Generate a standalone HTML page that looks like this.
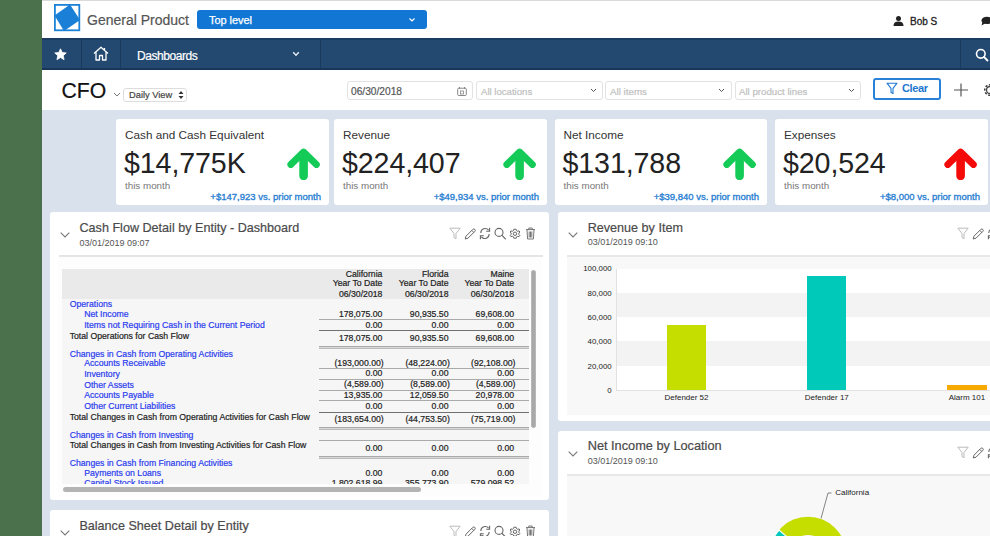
<!DOCTYPE html>
<html><head><meta charset="utf-8">
<style>
*{margin:0;padding:0;box-sizing:border-box}
html,body{width:990px;height:536px;overflow:hidden}
body{position:relative;background:#d9e2ec;font-family:"Liberation Sans",sans-serif;color:#222}
.a{position:absolute}
.t{position:absolute;white-space:nowrap;line-height:1;-webkit-text-stroke:0.2px currentColor}
#green{left:0;top:0;width:42px;height:536px;background:#4a704c}
#hdr{left:42px;top:0;width:948px;height:38px;background:#fff;border-top:1px solid #dadada}
#nav{left:42px;top:38px;width:948px;height:32px;background:#234970;border-top:2px solid #1b3c61;border-bottom:2px solid #173658}
.sep{position:absolute;top:0;width:1px;height:29px;background:#1a3a5c}
#filt{left:42px;top:70px;width:948px;height:40px;background:#fff}
.sel{position:absolute;height:18.5px;border:1px solid #e2e2e2;border-radius:3px;background:#fff}
.card{position:absolute;top:119px;height:86px;background:#fff;border-radius:3px}
.card .ti{position:absolute;left:9px;top:9px;font-size:11.75px;color:#333;white-space:nowrap}
.card .v{position:absolute;left:8px;top:28.4px;font-size:28.6px;color:#222;white-space:nowrap;letter-spacing:-0.1px}
.card .tm{position:absolute;left:9px;top:61px;font-size:9.8px;color:#777;white-space:nowrap}
.card .pm{position:absolute;right:8px;top:72px;font-size:9.5px;color:#2a80d2;white-space:nowrap;-webkit-text-stroke:0.35px #2a80d2}
.card svg{position:absolute}
.panel{position:absolute;background:#fff;border-radius:3px}
.ptitle{position:absolute;font-size:12.6px;color:#444;white-space:nowrap}
.pdate{position:absolute;font-size:8.9px;color:#555;white-space:nowrap}
.tbl{font-size:8.7px;white-space:nowrap}
.lb{position:absolute;color:#3535e8;white-space:nowrap;line-height:1}
.lk{position:absolute;color:#222;white-space:nowrap;line-height:1}
.num{position:absolute;color:#222;white-space:nowrap;line-height:1;text-align:right;width:90px}
.hl{position:absolute;left:319px;width:210px;height:1px;background:#9a9a9a}
</style></head><body>
<div id="green" class="a"></div>

<!-- header -->
<div id="hdr" class="a"></div>
<svg class="a" style="left:54px;top:4px" width="27" height="28" viewBox="0 0 27 28">
 <rect x="0.9" y="0.9" width="24.4" height="25.4" fill="none" stroke="#1c82d8" stroke-width="1.8"/>
 <polygon points="16,0.5 26,16 10,27 0.5,11.5" fill="#1a7fd6"/>
</svg>
<div class="t" style="left:87px;top:12.5px;font-size:14px;color:#555">General Product</div>
<div class="a" style="left:197px;top:10px;width:229.5px;height:19px;background:#1277d4;border-radius:3px"></div>
<div class="t" style="left:209px;top:15px;font-size:11px;color:#fff;letter-spacing:-0.05px;-webkit-text-stroke:0.25px #fff">Top level</div>
<svg class="a" style="left:407.7px;top:17px" width="8" height="6" viewBox="0 0 8 6"><path d="M1.5 1.5 L4 4 L6.5 1.5" fill="none" stroke="#fff" stroke-width="1.2"/></svg>
<svg class="a" style="left:893px;top:16px" width="11" height="10" viewBox="0 0 11 10"><circle cx="5.5" cy="2.6" r="2.5" fill="#222"/><path d="M0.5 10 Q0.5 5.6 5.5 5.6 Q10.5 5.6 10.5 10 Z" fill="#222"/></svg>
<div class="t" style="left:910px;top:16.6px;font-size:10px;color:#222;-webkit-text-stroke:0.3px #222;letter-spacing:0px">Bob S</div>
<svg class="a" style="left:981px;top:16px" width="12" height="10" viewBox="0 0 12 10"><ellipse cx="6" cy="4.4" rx="5.5" ry="3.7" fill="#222"/><path d="M1.5 6 L0.5 9.5 L4.5 7.2 Z" fill="#222"/></svg>

<!-- nav -->
<div id="nav" class="a">
 <div class="sep" style="left:39px"></div>
 <div class="sep" style="left:78px"></div>
 <div class="sep" style="left:277.5px"></div>
 <div class="sep" style="left:918px"></div>
</div>
<svg class="a" style="left:54px;top:48px" width="13" height="13" viewBox="0 0 24 24"><path d="M12 1.5 L15.2 8.3 L22.6 9.1 L17 14.1 L18.6 21.5 L12 17.7 L5.4 21.5 L7 14.1 L1.4 9.1 L8.8 8.3 Z" fill="#fff" stroke="#fff" stroke-width="1.5" stroke-linejoin="round"/></svg>
<svg class="a" style="left:93px;top:46px" width="16" height="15" viewBox="0 0 16 15"><path d="M1 7.5 L8 1.2 L15 7.5 M3 6 V14 H6.5 V9.5 H9.5 V14 H13 V6 M11.5 2 V4.5" fill="none" stroke="#fff" stroke-width="1.3" stroke-linejoin="round"/></svg>
<div class="t" style="left:137px;top:49.7px;font-size:12px;color:#fff;letter-spacing:-0.45px">Dashboards</div>
<svg class="a" style="left:292px;top:51px" width="8" height="6" viewBox="0 0 8 6"><path d="M1.2 1.2 L4 4.2 L6.8 1.2" fill="none" stroke="#e6ecf2" stroke-width="1.4"/></svg>
<svg class="a" style="left:975px;top:48px" width="14" height="14" viewBox="0 0 14 14"><circle cx="5.8" cy="5.8" r="4.3" fill="none" stroke="#fff" stroke-width="1.6"/><path d="M9 9 L12.5 12.5" stroke="#fff" stroke-width="1.8" stroke-linecap="round"/></svg>

<!-- filter row -->
<div id="filt" class="a"></div>
<div class="t" style="left:61.5px;top:79.6px;font-size:21.2px;color:#111">CFO</div>
<svg class="a" style="left:113px;top:92px" width="8" height="5" viewBox="0 0 8 5"><path d="M1 1 L4 4 L7 1" fill="none" stroke="#777" stroke-width="1"/></svg>
<div class="a" style="left:123px;top:88px;width:64px;height:14px;border:1px solid #ddd;border-radius:3px;background:#fff"></div>
<div class="t" style="left:129px;top:90.5px;font-size:9.3px;color:#444">Daily View</div>
<svg class="a" style="left:178px;top:90px" width="6" height="10" viewBox="0 0 6 10"><path d="M0.5 4 L3 1 L5.5 4 Z M0.5 6 L3 9 L5.5 6 Z" fill="#333"/></svg>

<div class="sel" style="left:347px;top:81px;width:126px"></div>
<div class="t" style="left:351px;top:87px;font-size:10.2px;color:#555">06/30/2018</div>
<svg class="a" style="left:457px;top:87px" width="10" height="9" viewBox="0 0 10 9"><rect x="0.7" y="1.2" width="8.6" height="7.3" rx="1" fill="none" stroke="#888" stroke-width="1"/><path d="M2.5 0 V2 M7.5 0 V2" stroke="#888" stroke-width="1"/><rect x="3.5" y="4" width="3" height="3" fill="none" stroke="#888" stroke-width="0.8"/></svg>
<div class="sel" style="left:476px;top:81px;width:127px"></div>
<div class="t" style="left:481px;top:87px;font-size:9.6px;color:#c0c0c0">All locations</div>
<svg class="a" style="left:590px;top:88px" width="7" height="5" viewBox="0 0 7 5"><path d="M1 1 L3.5 3.5 L6 1" fill="none" stroke="#555" stroke-width="1"/></svg>
<div class="sel" style="left:605px;top:81px;width:127px"></div>
<div class="t" style="left:610px;top:87px;font-size:9.8px;color:#c0c0c0">All items</div>
<svg class="a" style="left:718px;top:88px" width="7" height="5" viewBox="0 0 7 5"><path d="M1 1 L3.5 3.5 L6 1" fill="none" stroke="#555" stroke-width="1"/></svg>
<div class="sel" style="left:735px;top:81px;width:126px"></div>
<div class="t" style="left:739px;top:87px;font-size:9.7px;color:#c0c0c0">All product lines</div>
<svg class="a" style="left:848px;top:88px" width="7" height="5" viewBox="0 0 7 5"><path d="M1 1 L3.5 3.5 L6 1" fill="none" stroke="#555" stroke-width="1"/></svg>

<div class="a" style="left:873px;top:78px;width:68px;height:22px;border:2px solid #2a82d8;border-radius:3px"></div>
<svg class="a" style="left:886px;top:82px" width="12" height="13" viewBox="0 0 12 13"><path d="M1 1.2 H11 L7 6.3 V11.5 L5 10.2 V6.3 Z" fill="none" stroke="#1e78cf" stroke-width="1.1" stroke-linejoin="round"/></svg>
<div class="t" style="left:902px;top:83px;font-size:11px;color:#1e78cf;font-weight:bold;letter-spacing:-0.4px;-webkit-text-stroke:0">Clear</div>
<svg class="a" style="left:953px;top:83px" width="16" height="14" viewBox="0 0 16 14"><path d="M1 7 H15 M8 0.5 V13.5" stroke="#555" stroke-width="1.2"/></svg>
<svg class="a" style="left:982px;top:82px" width="16" height="16" viewBox="0 0 16 16"><circle cx="8" cy="8" r="5.2" fill="none" stroke="#444" stroke-width="1.6" stroke-dasharray="2.2 1.6"/><circle cx="8" cy="8" r="3.5" fill="none" stroke="#444" stroke-width="1.3"/></svg>

<!-- KPI cards -->
<div class="card" style="left:116px;width:213px">
 <div class="ti">Cash and Cash Equivalent</div>
 <div class="v">$14,775K</div>
 <div class="tm">this month</div>
 <div class="pm">+$147,923 vs. prior month</div>
 <svg style="left:170px;top:28px" width="36" height="33" viewBox="0 0 36 33"><path d="M4.8 17.5 L17.6 5 L30.4 17.5" fill="none" stroke="#14cb57" stroke-width="6.8" stroke-linecap="round" stroke-linejoin="round"/><path d="M17.6 8 V29" stroke="#14cb57" stroke-width="8.6" stroke-linecap="round"/></svg>
</div>
<div class="card" style="left:334px;width:213px">
 <div class="ti">Revenue</div>
 <div class="v">$224,407</div>
 <div class="tm">this month</div>
 <div class="pm">+$49,934 vs. prior month</div>
 <svg style="left:168px;top:28px" width="36" height="33" viewBox="0 0 36 33"><path d="M4.8 17.5 L17.6 5 L30.4 17.5" fill="none" stroke="#14cb57" stroke-width="6.8" stroke-linecap="round" stroke-linejoin="round"/><path d="M17.6 8 V29" stroke="#14cb57" stroke-width="8.6" stroke-linecap="round"/></svg>
</div>
<div class="card" style="left:554.5px;width:212.5px">
 <div class="ti">Net Income</div>
 <div class="v">$131,788</div>
 <div class="tm">this month</div>
 <div class="pm">+$39,840 vs. prior month</div>
 <svg style="left:167px;top:28px" width="36" height="33" viewBox="0 0 36 33"><path d="M4.8 17.5 L17.6 5 L30.4 17.5" fill="none" stroke="#14cb57" stroke-width="6.8" stroke-linecap="round" stroke-linejoin="round"/><path d="M17.6 8 V29" stroke="#14cb57" stroke-width="8.6" stroke-linecap="round"/></svg>
</div>
<div class="card" style="left:775px;width:213px">
 <div class="ti">Expenses</div>
 <div class="v">$20,524</div>
 <div class="tm">this month</div>
 <div class="pm">+$8,000 vs. prior month</div>
 <svg style="left:168px;top:28px" width="36" height="33" viewBox="0 0 36 33"><path d="M4.8 17.5 L17.6 5 L30.4 17.5" fill="none" stroke="#f50a0a" stroke-width="6.8" stroke-linecap="round" stroke-linejoin="round"/><path d="M17.6 8 V29" stroke="#f50a0a" stroke-width="8.6" stroke-linecap="round"/></svg>
</div>

<!-- PANELS -->
<div class="a" style="left:50px;top:212px;width:499px;height:288px;background:#fff;border-radius:3px"></div>
<svg class="a" style="left:60px;top:232px;" width="10" height="6" viewBox="0 0 10 6"><path d="M0.7 0.7 L5 5 L9.3 0.7" fill="none" stroke="#777" stroke-width="1.1"/></svg>
<div class="t" style="top:222.03px;font-size:12.6px;color:#4a4a4a;left:79.50px;">Cash Flow Detail by Entity - Dashboard</div>
<div class="t" style="top:238.78px;font-size:9px;color:#555;left:79.50px;-webkit-text-stroke:0">03/01/2019 09:07</div>
<svg class="a" style="left:449px;top:227px;" width="12" height="13" viewBox="0 0 12 13"><path d="M0.8 1.2 H11.2 L7 6.5 V11.8 L5 10.4 V6.5 Z" fill="none" stroke="#bbb" stroke-width="1" stroke-linejoin="round"/></svg>
<svg class="a" style="left:463.5px;top:227px;" width="12" height="13" viewBox="0 0 12 13"><path d="M2 9.2 L8.8 2.4 Q9.8 1.4 10.8 2.4 Q11.8 3.4 10.8 4.4 L4 11.2 L1.2 12 Z M7.8 3.4 L9.8 5.4" fill="none" stroke="#666" stroke-width="1" stroke-linejoin="round"/></svg>
<svg class="a" style="left:478.5px;top:227px;" width="12" height="13" viewBox="0 0 12 13"><path d="M1.8 6 A4.4 4.4 0 0 1 9.6 3.2 M10.2 7 A4.4 4.4 0 0 1 2.4 9.8" fill="none" stroke="#666" stroke-width="1.1"/><path d="M10.6 0.8 V4.2 H7.2 M1.4 12.2 V8.8 H4.8" fill="none" stroke="#666" stroke-width="1.1"/></svg>
<svg class="a" style="left:493.5px;top:227px;" width="12" height="13" viewBox="0 0 12 13"><circle cx="5" cy="5.4" r="4" fill="none" stroke="#666" stroke-width="1.1"/><path d="M8 8.4 L11.4 11.8" stroke="#666" stroke-width="1.2" stroke-linecap="round"/></svg>
<svg class="a" style="left:509px;top:227px;" width="12" height="13" viewBox="0 0 12 13"><path d="M6 1.2 L7.2 1.3 L7.6 2.7 L8.7 3.3 L10.1 2.9 L10.8 4 L9.9 5.1 L9.9 6.4 L10.8 7.5 L10.1 8.6 L8.7 8.3 L7.6 8.8 L7.2 10.2 L4.8 10.2 L4.4 8.8 L3.3 8.3 L1.9 8.6 L1.2 7.5 L2.1 6.4 L2.1 5.1 L1.2 4 L1.9 2.9 L3.3 3.3 L4.4 2.7 L4.8 1.3 Z" transform="translate(0,1)" fill="none" stroke="#666" stroke-width="1" stroke-linejoin="round"/><circle cx="6" cy="6.75" r="1.7" fill="none" stroke="#666" stroke-width="1"/></svg>
<svg class="a" style="left:524.5px;top:227px;" width="11" height="13" viewBox="0 0 11 13"><path d="M1 2.6 H10 M3.8 2.6 V1 H7.2 V2.6 M2 2.6 L2.6 12 H8.4 L9 2.6 M4.2 4.5 V10.5 M5.5 4.5 V10.5 M6.8 4.5 V10.5" fill="none" stroke="#666" stroke-width="0.9"/></svg>
<div class="a" style="left:58.5px;top:255.3px;width:484px;height:1.5px;background:#e3e5e8;"></div>
<div class="a" style="left:58px;top:257px;width:484px;height:238px;background:#fdfdfd;"></div>
<div class="a" style="left:62px;top:269px;width:467px;height:29.5px;background:#eaeaea;"></div>
<div class="a" style="left:62px;top:298.5px;width:467px;height:185.5px;background:#f6f6f6;"></div>
<div class="t" style="top:269.54px;font-size:8.7px;color:#222;right:607.60px;">California</div>
<div class="t" style="top:269.54px;font-size:8.7px;color:#222;right:541.50px;">Florida</div>
<div class="t" style="top:269.54px;font-size:8.7px;color:#222;right:475.80px;">Maine</div>
<div class="t" style="top:279.44px;font-size:8.7px;color:#222;right:607.60px;">Year To Date</div>
<div class="t" style="top:279.44px;font-size:8.7px;color:#222;right:541.50px;">Year To Date</div>
<div class="t" style="top:279.44px;font-size:8.7px;color:#222;right:475.80px;">Year To Date</div>
<div class="t" style="top:289.84px;font-size:8.7px;color:#222;right:607.60px;">06/30/2018</div>
<div class="t" style="top:289.84px;font-size:8.7px;color:#222;right:541.50px;">06/30/2018</div>
<div class="t" style="top:289.84px;font-size:8.7px;color:#222;right:475.80px;">06/30/2018</div>
<div class="t" style="top:300.04px;font-size:8.7px;color:#2b3cee;left:69.70px;">Operations</div>
<div class="t" style="top:310.24px;font-size:8.7px;color:#2b3cee;left:84.20px;">Net Income</div>
<div class="t" style="top:309.84px;font-size:8.7px;color:#222;right:607.60px;">178,075.00</div>
<div class="t" style="top:309.84px;font-size:8.7px;color:#222;right:541.50px;">90,935.50</div>
<div class="t" style="top:309.84px;font-size:8.7px;color:#222;right:475.80px;">69,608.00</div>
<div class="a" style="left:319px;top:319px;width:210px;height:1px;background:#aaa;"></div>
<div class="t" style="top:321.04px;font-size:8.7px;color:#2b3cee;left:84.20px;">Items not Requiring Cash in the Current Period</div>
<div class="t" style="top:320.64px;font-size:8.7px;color:#222;right:607.60px;">0.00</div>
<div class="t" style="top:320.64px;font-size:8.7px;color:#222;right:541.50px;">0.00</div>
<div class="t" style="top:320.64px;font-size:8.7px;color:#222;right:475.80px;">0.00</div>
<div class="a" style="left:319px;top:330px;width:210px;height:1px;background:#707070;"></div>
<div class="t" style="top:331.54px;font-size:8.7px;color:#222;left:69.70px;">Total Operations for Cash Flow</div>
<div class="t" style="top:334.14px;font-size:8.7px;color:#222;right:607.60px;">178,075.00</div>
<div class="t" style="top:334.14px;font-size:8.7px;color:#222;right:541.50px;">90,935.50</div>
<div class="t" style="top:334.14px;font-size:8.7px;color:#222;right:475.80px;">69,608.00</div>
<div class="a" style="left:319px;top:345.6px;width:210px;height:1.2px;background:#aaa;"></div>
<div class="a" style="left:319px;top:346.8px;width:210px;height:1px;background:#d8d8d8;"></div>
<div class="a" style="left:319px;top:347.8px;width:210px;height:1px;background:#bbb;"></div>
<div class="t" style="top:349.74px;font-size:8.7px;color:#2b3cee;left:69.70px;">Changes in Cash from Operating Activities</div>
<div class="t" style="top:359.44px;font-size:8.7px;color:#2b3cee;left:84.20px;">Accounts Receivable</div>
<div class="t" style="top:358.54px;font-size:8.7px;color:#222;right:606.30px;">(193,000.00)</div>
<div class="t" style="top:358.54px;font-size:8.7px;color:#222;right:540.20px;">(48,224.00)</div>
<div class="t" style="top:358.54px;font-size:8.7px;color:#222;right:474.50px;">(92,108.00)</div>
<div class="a" style="left:319px;top:368.2px;width:210px;height:1px;background:#aaa;"></div>
<div class="t" style="top:370.24px;font-size:8.7px;color:#2b3cee;left:84.20px;">Inventory</div>
<div class="t" style="top:369.34px;font-size:8.7px;color:#222;right:607.60px;">0.00</div>
<div class="t" style="top:369.34px;font-size:8.7px;color:#222;right:541.50px;">0.00</div>
<div class="t" style="top:369.34px;font-size:8.7px;color:#222;right:475.80px;">0.00</div>
<div class="a" style="left:319px;top:378.9px;width:210px;height:1px;background:#aaa;"></div>
<div class="t" style="top:380.84px;font-size:8.7px;color:#2b3cee;left:84.20px;">Other Assets</div>
<div class="t" style="top:379.94px;font-size:8.7px;color:#222;right:606.30px;">(4,589.00)</div>
<div class="t" style="top:379.94px;font-size:8.7px;color:#222;right:540.20px;">(8,589.00)</div>
<div class="t" style="top:379.94px;font-size:8.7px;color:#222;right:474.50px;">(4,589.00)</div>
<div class="a" style="left:319px;top:389.7px;width:210px;height:1px;background:#aaa;"></div>
<div class="t" style="top:391.44px;font-size:8.7px;color:#2b3cee;left:84.20px;">Accounts Payable</div>
<div class="t" style="top:390.74px;font-size:8.7px;color:#222;right:607.60px;">13,935.00</div>
<div class="t" style="top:390.74px;font-size:8.7px;color:#222;right:541.50px;">12,059.50</div>
<div class="t" style="top:390.74px;font-size:8.7px;color:#222;right:475.80px;">20,978.00</div>
<div class="a" style="left:319px;top:400.4px;width:210px;height:1px;background:#aaa;"></div>
<div class="t" style="top:402.14px;font-size:8.7px;color:#2b3cee;left:84.20px;">Other Current Liabilities</div>
<div class="t" style="top:401.54px;font-size:8.7px;color:#222;right:607.60px;">0.00</div>
<div class="t" style="top:401.54px;font-size:8.7px;color:#222;right:541.50px;">0.00</div>
<div class="t" style="top:401.54px;font-size:8.7px;color:#222;right:475.80px;">0.00</div>
<div class="a" style="left:319px;top:411.5px;width:210px;height:1px;background:#707070;"></div>
<div class="t" style="top:413.04px;font-size:8.7px;color:#222;left:69.70px;">Total Changes in Cash from Operating Activities for Cash Flow</div>
<div class="t" style="top:414.64px;font-size:8.7px;color:#222;right:606.30px;">(183,654.00)</div>
<div class="t" style="top:414.64px;font-size:8.7px;color:#222;right:540.20px;">(44,753.50)</div>
<div class="t" style="top:414.64px;font-size:8.7px;color:#222;right:474.50px;">(75,719.00)</div>
<div class="a" style="left:319px;top:427.2px;width:210px;height:1.2px;background:#aaa;"></div>
<div class="a" style="left:319px;top:428.4px;width:210px;height:1px;background:#d8d8d8;"></div>
<div class="a" style="left:319px;top:429.4px;width:210px;height:1px;background:#bbb;"></div>
<div class="t" style="top:430.74px;font-size:8.7px;color:#2b3cee;left:69.70px;">Changes in Cash from Investing</div>
<div class="a" style="left:319px;top:439.6px;width:210px;height:1px;background:#aaa;"></div>
<div class="t" style="top:441.14px;font-size:8.7px;color:#222;left:69.70px;">Total Changes in Cash from Investing Activities for Cash Flow</div>
<div class="t" style="top:443.64px;font-size:8.7px;color:#222;right:607.60px;">0.00</div>
<div class="t" style="top:443.64px;font-size:8.7px;color:#222;right:541.50px;">0.00</div>
<div class="t" style="top:443.64px;font-size:8.7px;color:#222;right:475.80px;">0.00</div>
<div class="a" style="left:319px;top:455.5px;width:210px;height:1.2px;background:#aaa;"></div>
<div class="a" style="left:319px;top:456.7px;width:210px;height:1px;background:#d8d8d8;"></div>
<div class="a" style="left:319px;top:457.7px;width:210px;height:1px;background:#bbb;"></div>
<div class="t" style="top:458.54px;font-size:8.7px;color:#2b3cee;left:69.70px;">Changes in Cash from Financing Activities</div>
<div class="t" style="top:469.04px;font-size:8.7px;color:#2b3cee;left:84.20px;">Payments on Loans</div>
<div class="t" style="top:468.94px;font-size:8.7px;color:#222;right:607.60px;">0.00</div>
<div class="t" style="top:468.94px;font-size:8.7px;color:#222;right:541.50px;">0.00</div>
<div class="t" style="top:468.94px;font-size:8.7px;color:#222;right:475.80px;">0.00</div>
<div class="t" style="top:479.04px;font-size:8.7px;color:#2b3cee;left:84.20px;">Capital Stock Issued</div>
<div class="t" style="top:478.64px;font-size:8.7px;color:#222;right:607.60px;">1,802,618.99</div>
<div class="t" style="top:478.64px;font-size:8.7px;color:#222;right:541.50px;">355,773.90</div>
<div class="t" style="top:478.64px;font-size:8.7px;color:#222;right:475.80px;">579,098.52</div>
<div class="a" style="left:58px;top:484px;width:484px;height:12px;background:#fdfdfd;"></div>
<div class="a" style="left:531px;top:270px;width:4.5px;height:158px;background:#a8a8a8;border-radius:2.2px;border:0.5px solid #b8b8b8"></div>
<div class="a" style="left:63px;top:487px;width:358px;height:5px;background:#b4b4b4;border-radius:2.5px"></div>
<div class="a" style="left:50px;top:510px;width:499px;height:40px;background:#fff;border-radius:3px"></div>
<svg class="a" style="left:60px;top:530px;" width="10" height="6" viewBox="0 0 10 6"><path d="M0.7 0.7 L5 5 L9.3 0.7" fill="none" stroke="#777" stroke-width="1.1"/></svg>
<div class="t" style="top:519.53px;font-size:12.6px;color:#4a4a4a;left:79.40px;">Balance Sheet Detail by Entity</div>
<svg class="a" style="left:449px;top:524.5px;" width="12" height="13" viewBox="0 0 12 13"><path d="M0.8 1.2 H11.2 L7 6.5 V11.8 L5 10.4 V6.5 Z" fill="none" stroke="#bbb" stroke-width="1" stroke-linejoin="round"/></svg>
<svg class="a" style="left:463.5px;top:524.5px;" width="12" height="13" viewBox="0 0 12 13"><path d="M2 9.2 L8.8 2.4 Q9.8 1.4 10.8 2.4 Q11.8 3.4 10.8 4.4 L4 11.2 L1.2 12 Z M7.8 3.4 L9.8 5.4" fill="none" stroke="#666" stroke-width="1" stroke-linejoin="round"/></svg>
<svg class="a" style="left:478.5px;top:524.5px;" width="12" height="13" viewBox="0 0 12 13"><path d="M1.8 6 A4.4 4.4 0 0 1 9.6 3.2 M10.2 7 A4.4 4.4 0 0 1 2.4 9.8" fill="none" stroke="#666" stroke-width="1.1"/><path d="M10.6 0.8 V4.2 H7.2 M1.4 12.2 V8.8 H4.8" fill="none" stroke="#666" stroke-width="1.1"/></svg>
<svg class="a" style="left:493.5px;top:524.5px;" width="12" height="13" viewBox="0 0 12 13"><circle cx="5" cy="5.4" r="4" fill="none" stroke="#666" stroke-width="1.1"/><path d="M8 8.4 L11.4 11.8" stroke="#666" stroke-width="1.2" stroke-linecap="round"/></svg>
<svg class="a" style="left:509px;top:524.5px;" width="12" height="13" viewBox="0 0 12 13"><path d="M6 1.2 L7.2 1.3 L7.6 2.7 L8.7 3.3 L10.1 2.9 L10.8 4 L9.9 5.1 L9.9 6.4 L10.8 7.5 L10.1 8.6 L8.7 8.3 L7.6 8.8 L7.2 10.2 L4.8 10.2 L4.4 8.8 L3.3 8.3 L1.9 8.6 L1.2 7.5 L2.1 6.4 L2.1 5.1 L1.2 4 L1.9 2.9 L3.3 3.3 L4.4 2.7 L4.8 1.3 Z" transform="translate(0,1)" fill="none" stroke="#666" stroke-width="1" stroke-linejoin="round"/><circle cx="6" cy="6.75" r="1.7" fill="none" stroke="#666" stroke-width="1"/></svg>
<svg class="a" style="left:524.5px;top:524.5px;" width="11" height="13" viewBox="0 0 11 13"><path d="M1 2.6 H10 M3.8 2.6 V1 H7.2 V2.6 M2 2.6 L2.6 12 H8.4 L9 2.6 M4.2 4.5 V10.5 M5.5 4.5 V10.5 M6.8 4.5 V10.5" fill="none" stroke="#666" stroke-width="0.9"/></svg>
<div class="a" style="left:558px;top:212px;width:440px;height:208.5px;background:#fff;border-radius:3px"></div>
<svg class="a" style="left:568px;top:232px;" width="10" height="6" viewBox="0 0 10 6"><path d="M0.7 0.7 L5 5 L9.3 0.7" fill="none" stroke="#777" stroke-width="1.1"/></svg>
<div class="t" style="top:221.93px;font-size:12.6px;color:#4a4a4a;left:587.70px;">Revenue by Item</div>
<div class="t" style="top:237.68px;font-size:9px;color:#555;left:587.70px;-webkit-text-stroke:0">03/01/2019 09:10</div>
<svg class="a" style="left:957px;top:227px;" width="12" height="13" viewBox="0 0 12 13"><path d="M0.8 1.2 H11.2 L7 6.5 V11.8 L5 10.4 V6.5 Z" fill="none" stroke="#bbb" stroke-width="1" stroke-linejoin="round"/></svg>
<svg class="a" style="left:971.5px;top:227px;" width="12" height="13" viewBox="0 0 12 13"><path d="M2 9.2 L8.8 2.4 Q9.8 1.4 10.8 2.4 Q11.8 3.4 10.8 4.4 L4 11.2 L1.2 12 Z M7.8 3.4 L9.8 5.4" fill="none" stroke="#666" stroke-width="1" stroke-linejoin="round"/></svg>
<svg class="a" style="left:986.5px;top:227px;" width="12" height="13" viewBox="0 0 12 13"><path d="M1.8 6 A4.4 4.4 0 0 1 9.6 3.2 M10.2 7 A4.4 4.4 0 0 1 2.4 9.8" fill="none" stroke="#666" stroke-width="1.1"/><path d="M10.6 0.8 V4.2 H7.2 M1.4 12.2 V8.8 H4.8" fill="none" stroke="#666" stroke-width="1.1"/></svg>
<svg class="a" style="left:1001.5px;top:227px;" width="12" height="13" viewBox="0 0 12 13"><circle cx="5" cy="5.4" r="4" fill="none" stroke="#666" stroke-width="1.1"/><path d="M8 8.4 L11.4 11.8" stroke="#666" stroke-width="1.2" stroke-linecap="round"/></svg>
<svg class="a" style="left:1017px;top:227px;" width="12" height="13" viewBox="0 0 12 13"><path d="M6 1.2 L7.2 1.3 L7.6 2.7 L8.7 3.3 L10.1 2.9 L10.8 4 L9.9 5.1 L9.9 6.4 L10.8 7.5 L10.1 8.6 L8.7 8.3 L7.6 8.8 L7.2 10.2 L4.8 10.2 L4.4 8.8 L3.3 8.3 L1.9 8.6 L1.2 7.5 L2.1 6.4 L2.1 5.1 L1.2 4 L1.9 2.9 L3.3 3.3 L4.4 2.7 L4.8 1.3 Z" transform="translate(0,1)" fill="none" stroke="#666" stroke-width="1" stroke-linejoin="round"/><circle cx="6" cy="6.75" r="1.7" fill="none" stroke="#666" stroke-width="1"/></svg>
<svg class="a" style="left:1032.5px;top:227px;" width="11" height="13" viewBox="0 0 11 13"><path d="M1 2.6 H10 M3.8 2.6 V1 H7.2 V2.6 M2 2.6 L2.6 12 H8.4 L9 2.6 M4.2 4.5 V10.5 M5.5 4.5 V10.5 M6.8 4.5 V10.5" fill="none" stroke="#666" stroke-width="0.9"/></svg>
<div class="a" style="left:566.5px;top:255px;width:440px;height:2px;background:#e6e8ea;"></div>
<div class="a" style="left:566.5px;top:257px;width:440px;height:158px;background:#f8f8f8;"></div>
<div class="a" style="left:616.3px;top:268.8px;width:380px;height:121.6px;background:#fff;"></div>
<div class="a" style="left:616.3px;top:292.8px;width:380px;height:24.3px;background:#f3f3f3;"></div>
<div class="a" style="left:616.3px;top:341.4px;width:380px;height:24.3px;background:#f3f3f3;"></div>
<div class="a" style="left:616.3px;top:268.8px;width:1px;height:121.6px;background:#e2e2e2;"></div>
<div class="a" style="left:616.3px;top:390px;width:380px;height:1px;background:#e2e2e2;"></div>
<div class="t" style="top:265.31px;font-size:7.9px;color:#222;right:378.30px;-webkit-text-stroke:0">100,000</div>
<div class="t" style="top:289.61px;font-size:7.9px;color:#222;right:378.30px;-webkit-text-stroke:0">80,000</div>
<div class="t" style="top:313.91px;font-size:7.9px;color:#222;right:378.30px;-webkit-text-stroke:0">60,000</div>
<div class="t" style="top:338.21px;font-size:7.9px;color:#222;right:378.30px;-webkit-text-stroke:0">40,000</div>
<div class="t" style="top:362.51px;font-size:7.9px;color:#222;right:378.30px;-webkit-text-stroke:0">20,000</div>
<div class="t" style="top:386.81px;font-size:7.9px;color:#222;right:378.30px;-webkit-text-stroke:0">0</div>
<div class="a" style="left:666.8px;top:325.2px;width:39.4px;height:65px;background:#c6dd00;"></div>
<div class="a" style="left:807.2px;top:276.4px;width:39.1px;height:113.8px;background:#00c9b9;"></div>
<div class="a" style="left:947.2px;top:385.3px;width:39.6px;height:4.9px;background:#f6aa00;"></div>
<div class="t" style="top:393.63px;font-size:8px;color:#222;left:386.50px;width:600px;text-align:center;-webkit-text-stroke:0">Defender 52</div>
<div class="t" style="top:393.63px;font-size:8px;color:#222;left:526.80px;width:600px;text-align:center;-webkit-text-stroke:0">Defender 17</div>
<div class="t" style="top:393.63px;font-size:8px;color:#222;left:666.90px;width:600px;text-align:center;-webkit-text-stroke:0">Alarm 101</div>
<div class="a" style="left:558px;top:431px;width:440px;height:120px;background:#fff;border-radius:3px"></div>
<svg class="a" style="left:568px;top:450.5px;" width="10" height="6" viewBox="0 0 10 6"><path d="M0.7 0.7 L5 5 L9.3 0.7" fill="none" stroke="#777" stroke-width="1.1"/></svg>
<div class="t" style="top:440.21px;font-size:12.75px;color:#4a4a4a;left:587.70px;">Net Income by Location</div>
<div class="t" style="top:456.68px;font-size:9px;color:#555;left:587.70px;-webkit-text-stroke:0">03/01/2019 09:10</div>
<svg class="a" style="left:957px;top:445.5px;" width="12" height="13" viewBox="0 0 12 13"><path d="M0.8 1.2 H11.2 L7 6.5 V11.8 L5 10.4 V6.5 Z" fill="none" stroke="#bbb" stroke-width="1" stroke-linejoin="round"/></svg>
<svg class="a" style="left:971.5px;top:445.5px;" width="12" height="13" viewBox="0 0 12 13"><path d="M2 9.2 L8.8 2.4 Q9.8 1.4 10.8 2.4 Q11.8 3.4 10.8 4.4 L4 11.2 L1.2 12 Z M7.8 3.4 L9.8 5.4" fill="none" stroke="#666" stroke-width="1" stroke-linejoin="round"/></svg>
<svg class="a" style="left:986.5px;top:445.5px;" width="12" height="13" viewBox="0 0 12 13"><path d="M1.8 6 A4.4 4.4 0 0 1 9.6 3.2 M10.2 7 A4.4 4.4 0 0 1 2.4 9.8" fill="none" stroke="#666" stroke-width="1.1"/><path d="M10.6 0.8 V4.2 H7.2 M1.4 12.2 V8.8 H4.8" fill="none" stroke="#666" stroke-width="1.1"/></svg>
<svg class="a" style="left:1001.5px;top:445.5px;" width="12" height="13" viewBox="0 0 12 13"><circle cx="5" cy="5.4" r="4" fill="none" stroke="#666" stroke-width="1.1"/><path d="M8 8.4 L11.4 11.8" stroke="#666" stroke-width="1.2" stroke-linecap="round"/></svg>
<svg class="a" style="left:1017px;top:445.5px;" width="12" height="13" viewBox="0 0 12 13"><path d="M6 1.2 L7.2 1.3 L7.6 2.7 L8.7 3.3 L10.1 2.9 L10.8 4 L9.9 5.1 L9.9 6.4 L10.8 7.5 L10.1 8.6 L8.7 8.3 L7.6 8.8 L7.2 10.2 L4.8 10.2 L4.4 8.8 L3.3 8.3 L1.9 8.6 L1.2 7.5 L2.1 6.4 L2.1 5.1 L1.2 4 L1.9 2.9 L3.3 3.3 L4.4 2.7 L4.8 1.3 Z" transform="translate(0,1)" fill="none" stroke="#666" stroke-width="1" stroke-linejoin="round"/><circle cx="6" cy="6.75" r="1.7" fill="none" stroke="#666" stroke-width="1"/></svg>
<svg class="a" style="left:1032.5px;top:445.5px;" width="11" height="13" viewBox="0 0 11 13"><path d="M1 2.6 H10 M3.8 2.6 V1 H7.2 V2.6 M2 2.6 L2.6 12 H8.4 L9 2.6 M4.2 4.5 V10.5 M5.5 4.5 V10.5 M6.8 4.5 V10.5" fill="none" stroke="#666" stroke-width="0.9"/></svg>
<div class="a" style="left:566.5px;top:474px;width:440px;height:2px;background:#e6e8ea;"></div>
<div class="a" style="left:566.5px;top:476px;width:440px;height:70px;background:#f8f8f8;"></div>
<svg class="a" style="left:760px;top:480px;" width="120" height="56" viewBox="0 0 120 56"><path d="M61 38.5 L68 13 H71.5" fill="none" stroke="#777" stroke-width="0.9"/><g transform="translate(48,75)"><circle r="38.3" fill="#c6dd00"/><path d="M0 0 L-29 -25 A38.3 38.3 0 0 0 -38 5 Z" fill="#00c9b9" stroke="#fff" stroke-width="1.2"/><circle r="20" fill="#f8f8f8"/></g></svg>
<div class="t" style="top:489.23px;font-size:8px;color:#222;left:835.30px;-webkit-text-stroke:0">California</div>
</body></html>
